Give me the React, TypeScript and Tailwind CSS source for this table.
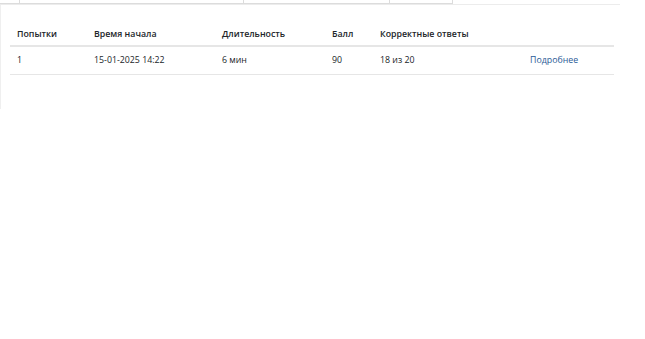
const attempts = [
  { n: 1, start: "15-01-2025 14:22", duration: "6 мин", score: 90, correct: "18 из 20" },
];

const cols = [
  { label: "Попытки", w: "w-[77px]" },
  { label: "Время начала", w: "w-[128px]" },
  { label: "Длительность", w: "w-[110px]" },
  { label: "Балл", w: "w-[48px]" },
  { label: "Корректные ответы", w: "w-[150px]" },
  { label: "", w: "" },
];

export default function App() {
  return (
    <div className="w-[645px] h-[339px] bg-white text-[#212529] font-['Open_Sans','Noto_Sans',sans-serif]">
      <div className="flex w-[620px] h-[5px] border-b border-[#ececec]">
        <div className="w-[19px] h-[4px] border-b border-[#dcdcdc]" />
        <div className="w-[225px] h-[4px] border-x border-b border-[#dcdcdc]" />
        <div className="w-[145px] h-[4px] border-b border-[#dcdcdc]" />
        <div className="w-[64px] h-[4px] border-x border-b border-[#dcdcdc]" />
      </div>
      <div className="w-[620px] h-[104px] border-l border-[#efefef] pl-[9px] pt-[17px]">
        <table className="w-[604px] text-[8.8px] border-collapse">
          <thead>
            <tr className="border-b-2 border-[#e6e6e6]">
              {cols.map((c, i) => (
                <th key={i} className={`${c.w} text-left font-semibold px-[7px] pt-[2px] h-[24px]`}>
                  {c.label}
                </th>
              ))}
            </tr>
          </thead>
          <tbody>
            {attempts.map((a) => (
              <tr key={a.n} className="border-b border-[#e6e6e6]">
                <td className="px-[7px] h-[28px]">{a.n}</td>
                <td className="px-[7px]">{a.start}</td>
                <td className="px-[7px]">{a.duration}</td>
                <td className="px-[7px]">{a.score}</td>
                <td className="px-[7px]">{a.correct}</td>
                <td className="px-[7px]">
                  <a href="#" className="text-[#2a5a96]">Подробнее</a>
                </td>
              </tr>
            ))}
          </tbody>
        </table>
      </div>
    </div>
  );
}
